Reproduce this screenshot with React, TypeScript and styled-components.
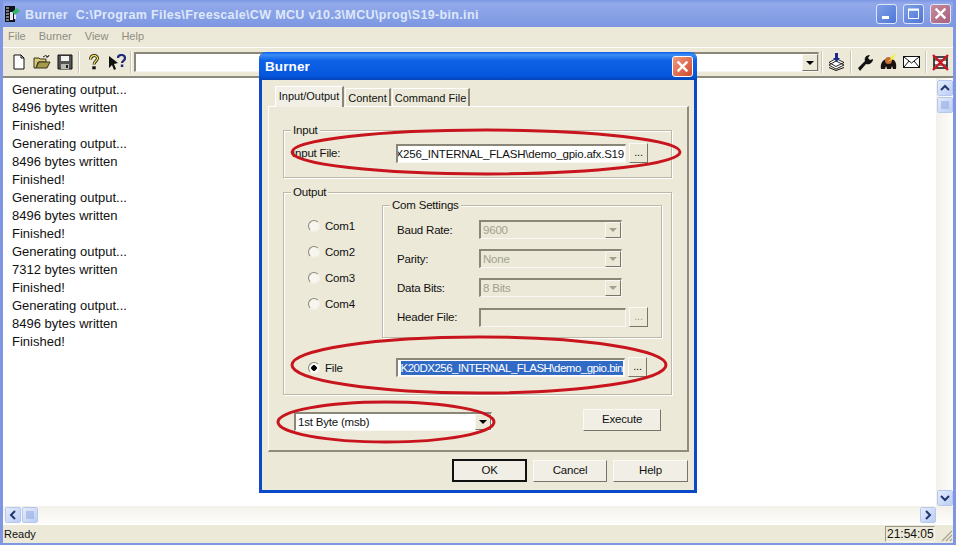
import React from "react";
import styled, { createGlobalStyle } from "styled-components";

const logLines = [
    "Generating output...", "8496 bytes written", "Finished!",
    "Generating output...", "8496 bytes written", "Finished!",
    "Generating output...", "8496 bytes written", "Finished!",
    "Generating output...", "7312 bytes written", "Finished!",
    "Generating output...", "8496 bytes written", "Finished!",
];

const GlobalStyle = createGlobalStyle`
    html, body { margin: 0; padding: 0; background: #ece9d8; overflow: hidden; }
    * { box-sizing: border-box; }
`;

const Page = styled.div`
    position: relative;
    width: 956px;
    height: 545px;
    display: flex;
    flex-direction: column;
    background: #ece9d8;
    font-family: "Liberation Sans", sans-serif;
    font-size: 12px;
    color: #111;
    border-left: 3px solid #7f96e2;
    border-right: 3px solid #7f96e2;
    border-bottom: 2px solid #7f96e2;
    overflow: hidden;
`;

const TitleBar = styled.div`
    height: 27px;
    margin: 0 -3px;
    padding: 0 5px;
    display: flex;
    align-items: center;
    gap: 4px;
    background: linear-gradient(180deg, #7d97e4 0%, #92a9ea 14%, #86a0e6 60%, #7c96e2 100%);
`;

const TitleText = styled.div`
    flex: 1;
    color: #dfe8fa;
    font-weight: bold;
    font-size: 12.5px;
    letter-spacing: 0.35px;
    white-space: pre;
    margin-top: 2px;
`;

const WinButton = styled.div<{ $close?: boolean }>`
    width: 21px;
    height: 20px;
    margin-left: 2px;
    border: 1px solid #dfe6f8;
    border-radius: 3px;
    background: ${(p) => (p.$close ? "linear-gradient(135deg, #c58a9c, #a95f7c)" : "linear-gradient(135deg, #7f9fe8, #4f76d6)")};
    display: flex;
    align-items: center;
    justify-content: center;
`;

const MenuBar = styled.div`
    height: 20px;
    display: flex;
    align-items: center;
    padding: 0 0 2px 5px;
    gap: 13px;
    color: #8f8d82;
    font-size: 11px;
`;

const Toolbar = styled.div`
    height: 31px;
    display: flex;
    align-items: center;
    padding-left: 4px;
    padding-right: 1px;
    border-top: 1px solid #fff;
    border-bottom: 2px solid #8d8a7c;
`;

const ToolIcon = styled.div`
    width: 23px;
    height: 24px;
    display: flex;
    align-items: center;
    justify-content: center;
    flex: none;
`;

const ToolSep = styled.div`
    width: 2px;
    height: 22px;
    margin: 0 2px;
    flex: none;
    background: #c9c5b4;
    border-right: 1px solid #fff;
`;

const ToolCombo = styled.div`
    flex: 1;
    height: 20px;
    background: #fff;
    border-top: 2px solid #8a8778;
    border-left: 2px solid #8a8778;
    border-right: 1px solid #d8d4c4;
    border-bottom: 1px solid #f6f5ef;
    display: flex;
    justify-content: flex-end;
`;

const ComboArrow = styled.div<{ $disabled?: boolean }>`
    width: 16px;
    flex: none;
    background: #ece9d8;
    border: 1px solid;
    border-color: #f8f7f1 #77746a #77746a #f8f7f1;
    display: flex;
    align-items: center;
    justify-content: center;
    &::after {
        content: "";
        border-top: 4px solid ${(p) => (p.$disabled ? "#a3a08f" : "#000")};
        border-left: 4px solid transparent;
        border-right: 4px solid transparent;
    }
`;

const Middle = styled.div`
    flex: 1;
    display: flex;
    min-height: 0;
`;

const LogArea = styled.div`
    flex: 1;
    background: #fff;
    padding: 3px 0 0 9px;
`;

const LogLine = styled.div`
    height: 18px;
    line-height: 18px;
    font-size: 13px;
`;

const VScroll = styled.div`
    width: 17px;
    background: linear-gradient(90deg, #f3f1ea, #fdfdfb);
    display: flex;
    flex-direction: column;
    padding: 2px 0 0 1px;
    gap: 1px;
`;

const ScrollBtn = styled.div`
    width: 16px;
    height: 16px;
    flex: none;
    border: 1px solid #fff;
    outline: 1px solid #b6c7ee;
    outline-offset: -1px;
    border-radius: 2px;
    background: linear-gradient(135deg, #e4ecfc, #bccdf4);
    display: flex;
    align-items: center;
    justify-content: center;
`;

const VSpacer = styled.div`
    flex: 1;
`;

const HScroll = styled.div`
    height: 19px;
    display: flex;
    align-items: center;
    gap: 1px;
    padding: 0 17px 0 2px;
    background: linear-gradient(180deg, #f3f1ea, #fdfdfb);
    border-bottom: 1px solid #fff;
`;

const StatusBar = styled.div`
    height: 18px;
    display: flex;
    align-items: center;
    padding-left: 1px;
    font-size: 11px;
`;

const StatusText = styled.div`
    flex: 1;
`;

const Clock = styled.div`
    width: 50px;
    height: 16px;
    line-height: 15px;
    padding-left: 1px;
    font-size: 12px;
    border: 1px solid;
    border-color: #9a9788 #f5f4ee #f5f4ee #9a9788;
`;

const Grip = styled.div`
    width: 18px;
    height: 16px;
    display: flex;
    align-items: flex-end;
    justify-content: flex-end;
`;

/* dialog floats over the main window */
const Dialog = styled.div`
    position: absolute;
    left: 256px;
    top: 52px;
    width: 438px;
    height: 441px;
    display: flex;
    flex-direction: column;
    background: #ece9d8;
    border: 3px solid #0b49c8;
    border-top: none;
    border-radius: 7px 7px 0 0;
`;

const DialogTitle = styled.div`
    height: 29px;
    margin: 0 -3px;
    padding: 0 4px 0 6px;
    display: flex;
    align-items: center;
    justify-content: space-between;
    border-radius: 7px 7px 0 0;
    background: linear-gradient(180deg, #0a5de6 0%, #3b8cf6 10%, #0f62e6 30%, #0556dc 85%, #0444b8 100%);
    color: #fff;
    font-weight: bold;
    font-size: 13.5px;
    letter-spacing: 0.1px;
`;

const DialogClose = styled.div`
    width: 21px;
    height: 21px;
    border: 1px solid #fff;
    border-radius: 3px;
    background: linear-gradient(135deg, #ee9a80, #d2492c);
    display: flex;
    align-items: center;
    justify-content: center;
`;

const DialogBody = styled.div`
    flex: 1;
    display: flex;
    flex-direction: column;
    padding: 5px 5px 8px 6px;
    font-size: 11.5px;
    letter-spacing: -0.2px;
`;

const Tabs = styled.div`
    display: flex;
    align-items: flex-end;
    height: 21px;
    padding-left: 7px;
    gap: 1px;
`;

const Tab = styled.div<{ $active?: boolean; $w: number }>`
    width: ${(p) => p.$w}px;
    height: ${(p) => (p.$active ? 21 : 18)}px;
    line-height: ${(p) => (p.$active ? 19 : 18)}px;
    text-align: center;
    white-space: nowrap;
    font-size: 11px;
    letter-spacing: 0;
    background: ${(p) => (p.$active ? "#f2f0e6" : "#ece9d8")};
    border: 1px solid #fff;
    border-right: 2px solid #8a8778;
    border-bottom: none;
    margin-bottom: ${(p) => (p.$active ? -1 : 0)}px;
    position: relative;
`;

const TabPanel = styled.div`
    height: 346px;
    padding: 23px 15px 0 14px;
    border: 1px solid #fff;
    border-right: 2px solid #8f8c7d;
    border-bottom: 2px solid #8f8c7d;
    display: flex;
    flex-direction: column;
`;

const Group = styled.div<{ $h: number; $w?: number }>`
    position: relative;
    height: ${(p) => p.$h}px;
    width: ${(p) => (p.$w ? p.$w + "px" : "auto")};
    border: 1px solid #bdb9a8;
    box-shadow: 1px 1px 0 #fff, inset 1px 1px 0 #fff;
`;

const OutputGroup = styled(Group)`
    margin-top: 14px;
`;

const Legend = styled.span`
    position: absolute;
    top: -8px;
    left: 7px;
    padding: 0 2px;
    line-height: 14px;
    background: #ece9d8;
`;

const Row = styled.div`
    display: flex;
    align-items: center;
`;

const InputRow = styled(Row)`
    padding: 12px 0 0 8px;
`;

const FieldLabel = styled.span<{ $w: number }>`
    width: ${(p) => p.$w}px;
    flex: none;
`;

const TextBox = styled.div<{ $w: number; $disabled?: boolean }>`
    width: ${(p) => p.$w}px;
    height: 19px;
    padding: 0 1px;
    display: flex;
    align-items: center;
    justify-content: flex-end;
    overflow: hidden;
    white-space: pre;
    background: ${(p) => (p.$disabled ? "#ece9d8" : "#fff")};
    border-top: 2px solid #8a8778;
    border-left: 2px solid #8a8778;
    border-right: 1px solid #f8f7f1;
    border-bottom: 1px solid #f8f7f1;
`;

const Selected = styled.span`
    background: #316ac5;
    color: #fff;
    line-height: 14px;
    letter-spacing: -0.5px;
`;

const DotsButton = styled.div<{ $disabled?: boolean }>`
    width: 19px;
    height: 20px;
    margin-left: 3px;
    flex: none;
    text-align: center;
    line-height: 16px;
    font-size: 11px;
    color: ${(p) => (p.$disabled ? "#a3a08f" : "#111")};
    border: 1px solid;
    border-color: #fbfaf5 #77746a #77746a #fbfaf5;
`;

const OutputColumns = styled.div`
    display: flex;
    padding: 12px 0 0 24px;
`;

const Radios = styled.div`
    width: 74px;
    display: flex;
    flex-direction: column;
    gap: 13px;
    padding-top: 14px;
`;

const RadioRow = styled.label`
    display: flex;
    align-items: center;
    height: 13px;
    gap: 5px;
`;

const FileRow = styled(RadioRow)`
    position: absolute;
    left: 24px;
    top: 165px;
    height: 20px;
`;

const Radio = styled.span<{ $on?: boolean }>`
    width: 12px;
    height: 12px;
    flex: none;
    border-radius: 50%;
    background: ${(p) => (p.$on ? "radial-gradient(circle, #000 0 2.5px, #fbfaf5 3px)" : "#f6f5ee")};
    border: 1px solid;
    border-color: #8a8778 #f2f0e6 #f2f0e6 #8a8778;
`;

const ComRows = styled.div`
    display: flex;
    flex-direction: column;
    gap: 10px;
    padding: 14px 0 0 14px;
`;

const DisabledSelect = styled.div`
    width: 143px;
    height: 19px;
    display: flex;
    justify-content: space-between;
    align-items: stretch;
    padding-left: 2px;
    line-height: 16px;
    color: #a3a08f;
    border-top: 2px solid #8a8778;
    border-left: 2px solid #8a8778;
    border-right: 1px solid #f8f7f1;
    border-bottom: 1px solid #f8f7f1;
`;

const FileFieldRow = styled(Row)`
    position: absolute;
    left: 112px;
    top: 164px;
`;

const BottomRow = styled(Row)`
    align-items: flex-end;
    justify-content: space-between;
    padding: 14px 11px 0 11px;
`;

const ByteCombo = styled.div`
    width: 198px;
    height: 19px;
    display: flex;
    align-items: stretch;
    justify-content: space-between;
    padding-left: 2px;
    line-height: 16px;
    background: #fff;
    border-top: 2px solid #8a8778;
    border-left: 2px solid #8a8778;
    border-right: 1px solid #f8f7f1;
    border-bottom: 1px solid #f8f7f1;
`;

const PushButton = styled.div<{ $w: number; $default?: boolean }>`
    width: ${(p) => p.$w}px;
    height: ${(p) => (p.$default ? 23 : 22)}px;
    line-height: 19px;
    text-align: center;
    background: #f1efe5;
    border: ${(p) => (p.$default ? "2px solid #111" : "1px solid")};
    border-color: ${(p) => (p.$default ? "#111" : "#fbfaf5 #77746a #77746a #fbfaf5")};
`;

const DialogButtons = styled(Row)`
    justify-content: flex-end;
    gap: 6px;
    padding: 7px 1px 0 0;
`;

const MarkUps = styled.svg`
    position: absolute;
    left: -3px;
    top: 0;
    width: 438px;
    height: 441px;
    pointer-events: none;
`;

const NewIcon = () => (
    <svg width="16" height="16" viewBox="0 0 16 16">
        <path d="M3 1h7l3 3v11H3z" fill="#fff" stroke="#111" />
        <path d="M10 1v3h3" fill="none" stroke="#111" />
    </svg>
);
const OpenIcon = () => (
    <svg width="18" height="16" viewBox="0 0 18 16">
        <path d="M1 4h5l1 1h6v3H5l-2 6H1z" fill="#d9c978" stroke="#3a3518" />
        <path d="M3 14l3-6h11l-3 6z" fill="#a59a4c" stroke="#3a3518" />
        <path d="M10 3q3-3 5 0M15 3l1-2M15 3l-2 0" fill="none" stroke="#222" />
    </svg>
);
const SaveIcon = () => (
    <svg width="16" height="16" viewBox="0 0 16 16">
        <path d="M1 1h14v14H1z" fill="#555" stroke="#111" />
        <path d="M4 2h8v5H4z" fill="#f4f4f0" />
        <path d="M4 10h8v5H4z" fill="#b8b8ac" />
        <path d="M9 11h2v3H9z" fill="#222" />
    </svg>
);
const HelpIcon = () => (
    <svg width="12" height="16" viewBox="0 0 14 18">
        <path d="M3 6c0-6 8-6 8-1 0 3-4 3-4 7" fill="none" stroke="#111" strokeWidth="3.4" />
        <path d="M3 6c0-6 8-6 8-1 0 3-4 3-4 7" fill="none" stroke="#f4e05a" strokeWidth="1.6" />
        <rect x="5" y="14" width="4" height="3.5" fill="#111" />
    </svg>
);
const ArrowHelpIcon = () => (
    <svg width="18" height="17" viewBox="0 0 18 17">
        <path d="M1 2l9 7-4 1 2 5-2 1-2-5-3 3z" fill="#111" />
        <path d="M10 4c0-4 7-4 7 0 0 3-3 2.500-3 5" fill="none" stroke="#1c2a78" strokeWidth="2.200" />
        <rect x="12.800" y="10.500" width="2.500" height="2.500" fill="#1c2a78" />
    </svg>
);
const StackIcon = () => (
    <svg width="17" height="18" viewBox="0 0 17 18">
        <path d="M1 12l7-4 8 4-8 4z M1 9.500l7-4 8 4-8 4z" fill="#fff" stroke="#111" strokeWidth="0.900" />
        <path d="M1 14.500l7 3 8-3" fill="none" stroke="#111" />
        <path d="M7 0h3v5h2l-3.500 4L5 5h2z" fill="#1b2a8f" />
    </svg>
);
const WrenchIcon = () => (
    <svg width="17" height="17" viewBox="0 0 17 17">
        <path d="M1 14l7-7c-1-3 1-6 5-6l-2 3 2 2 3-1c0 4-4 6-7 5l-6 7z" fill="#111" />
    </svg>
);
const PersonIcon = () => (
    <svg width="17" height="16" viewBox="0 0 17 16">
        <path d="M1 15c-1-6 2-9 5-10h6c3 1 5 4 4 10h-3l-1-3-1 3H7l-1-3-1 3z" fill="#1a1210" />
        <circle cx="8.500" cy="6.500" r="3.500" fill="#c46a3a" />
        <path d="M15 0l-5 4 1 1-4 3 7-3-1-1 3-4z" fill="#f5ee2a" />
    </svg>
);
const MailIcon = () => (
    <svg width="17" height="12" viewBox="0 0 17 12">
        <rect x="0.500" y="0.500" width="16" height="11" fill="#fff" stroke="#111" />
        <path d="M1 1l7.500 6L16 1M1 11l5-6M16 11l-5-6" fill="none" stroke="#111" />
    </svg>
);
const StopIcon = () => (
    <svg width="17" height="17" viewBox="0 0 17 17">
        <rect x="2" y="3" width="13" height="11" fill="#f2f2f2" stroke="#111" strokeWidth="1.500" />
        <path d="M2 6h13M2 11h13" stroke="#111" />
        <path d="M1 1l15 15M16 1L1 16" stroke="#cc1420" strokeWidth="2.400" />
    </svg>
);
const AppIcon = () => (
    <svg width="16" height="16" viewBox="0 0 16 16">
        <rect width="10" height="16" fill="#101018" />
        <path d="M1 2h3M1 5h3M1 8h3M1 11h3M1 14h3" stroke="#e8e8e8" />
        <path d="M5 6h3v8H5zM9 8h2v5H9z" fill="#e8e8f8" />
        <path d="M7 6l5-4 3 3-5 4z" fill="#35b56a" />
    </svg>
);
const Chevron = ({ d }: { d: string }) => (
    <svg width="10" height="10" viewBox="0 0 10 10">
        <path d={d} fill="none" stroke="#20366f" strokeWidth="2" />
    </svg>
);
const Thumb = ({ vertical }: { vertical?: boolean }) => (
    <svg width="8" height="8" viewBox="0 0 8 8">
        <path d={vertical ? "M0 1h8M0 3h8M0 5h8M0 7h8" : "M1 0v8M3 0v8M5 0v8M7 0v8"} stroke="#8aa3dc" />
    </svg>
);
const CloseGlyph = ({ size }: { size: number }) => (
    <svg width={size} height={size} viewBox="0 0 12 12">
        <path d="M1.500 1.500l9 9M10.500 1.500l-9 9" stroke="#fff" strokeWidth="2.200" />
    </svg>
);

const App = () => {
    return (
        <Page>
            <GlobalStyle />
            <TitleBar>
                <AppIcon />
                <TitleText>{"Burner  C:\\Program Files\\Freescale\\CW MCU v10.3\\MCU\\prog\\S19-bin.ini"}</TitleText>
                <WinButton>
                    <svg width="13" height="13" viewBox="0 0 13 13"><rect x="2" y="9" width="7" height="3" fill="#fff" /></svg>
                </WinButton>
                <WinButton>
                    <svg width="13" height="13" viewBox="0 0 13 13"><path d="M1.500 3h10v8.500h-10z" fill="none" stroke="#fff" /><rect x="1" y="1.500" width="11" height="2" fill="#fff" /></svg>
                </WinButton>
                <WinButton $close><CloseGlyph size={13} /></WinButton>
            </TitleBar>
            <MenuBar>
                <span>File</span>
                <span>Burner</span>
                <span>View</span>
                <span>Help</span>
            </MenuBar>
            <Toolbar>
                <ToolIcon><NewIcon /></ToolIcon>
                <ToolIcon><OpenIcon /></ToolIcon>
                <ToolIcon><SaveIcon /></ToolIcon>
                <ToolSep />
                <ToolIcon><HelpIcon /></ToolIcon>
                <ToolIcon><ArrowHelpIcon /></ToolIcon>
                <ToolSep />
                <ToolCombo><ComboArrow /></ToolCombo>
                <ToolSep />
                <ToolIcon><StackIcon /></ToolIcon>
                <ToolSep />
                <ToolIcon><WrenchIcon /></ToolIcon>
                <ToolIcon><PersonIcon /></ToolIcon>
                <ToolIcon><MailIcon /></ToolIcon>
                <ToolSep />
                <ToolIcon><StopIcon /></ToolIcon>
            </Toolbar>
            <Middle>
                <LogArea>
                    {logLines.map((line, i) => (
                        <LogLine key={i}>{line}</LogLine>
                    ))}
                </LogArea>
                <VScroll>
                    <ScrollBtn><Chevron d="M1 7l4-4 4 4" /></ScrollBtn>
                    <ScrollBtn><Thumb vertical /></ScrollBtn>
                    <VSpacer />
                    <ScrollBtn><Chevron d="M1 3l4 4 4-4" /></ScrollBtn>
                </VScroll>
            </Middle>
            <HScroll>
                <ScrollBtn><Chevron d="M7 1L3 5l4 4" /></ScrollBtn>
                <ScrollBtn><Thumb /></ScrollBtn>
                <VSpacer />
                <ScrollBtn><Chevron d="M3 1l4 4-4 4" /></ScrollBtn>
            </HScroll>
            <StatusBar>
                <StatusText>Ready</StatusText>
                <Clock>21:54:05</Clock>
                <Grip>
                    <svg width="14" height="14" viewBox="0 0 14 14">
                        <path d="M13 3L3 13M13 7l-6 6M13 11l-2 2" stroke="#a8a595" strokeWidth="1.200" />
                    </svg>
                </Grip>
            </StatusBar>

            <Dialog>
                <DialogTitle>
                    <span>Burner</span>
                    <DialogClose><CloseGlyph size={13} /></DialogClose>
                </DialogTitle>
                <DialogBody>
                    <Tabs>
                        <Tab $active $w={69}>Input/Output</Tab>
                        <Tab $w={46}>Content</Tab>
                        <Tab $w={78}>Command File</Tab>
                    </Tabs>
                    <TabPanel>
                        <Group $h={48}>
                            <Legend>Input</Legend>
                            <InputRow>
                                <FieldLabel $w={104}>Input File:</FieldLabel>
                                <TextBox $w={230}>{"X256_INTERNAL_FLASH\\demo_gpio.afx.S19"}</TextBox>
                                <DotsButton>...</DotsButton>
                            </InputRow>
                        </Group>
                        <OutputGroup $h={203}>
                            <Legend>Output</Legend>
                            <OutputColumns>
                                <Radios>
                                    <RadioRow><Radio />Com1</RadioRow>
                                    <RadioRow><Radio />Com2</RadioRow>
                                    <RadioRow><Radio />Com3</RadioRow>
                                    <RadioRow><Radio />Com4</RadioRow>
                                </Radios>
                                <Group $h={133} $w={280}>
                                    <Legend>Com Settings</Legend>
                                    <ComRows>
                                        <Row><FieldLabel $w={82}>Baud Rate:</FieldLabel><DisabledSelect>9600<ComboArrow $disabled /></DisabledSelect></Row>
                                        <Row><FieldLabel $w={82}>Parity:</FieldLabel><DisabledSelect>None<ComboArrow $disabled /></DisabledSelect></Row>
                                        <Row><FieldLabel $w={82}>Data Bits:</FieldLabel><DisabledSelect>8 Bits<ComboArrow $disabled /></DisabledSelect></Row>
                                        <Row><FieldLabel $w={82}>Header File:</FieldLabel><TextBox $w={147} $disabled /><DotsButton $disabled>...</DotsButton></Row>
                                    </ComRows>
                                </Group>
                            </OutputColumns>
                            <FileRow><Radio $on />File</FileRow>
                            <FileFieldRow>
                                <TextBox $w={229}><Selected>{"K20DX256_INTERNAL_FLASH\\demo_gpio.bin"}</Selected></TextBox>
                                <DotsButton>...</DotsButton>
                            </FileFieldRow>
                        </OutputGroup>
                        <BottomRow>
                            <ByteCombo>1st Byte (msb)<ComboArrow /></ByteCombo>
                            <PushButton $w={78}>Execute</PushButton>
                        </BottomRow>
                    </TabPanel>
                    <DialogButtons>
                        <PushButton $w={75} $default>OK</PushButton>
                        <PushButton $w={74}>Cancel</PushButton>
                        <PushButton $w={75}>Help</PushButton>
                    </DialogButtons>
                </DialogBody>
                <MarkUps viewBox="0 0 438 441">
                    <ellipse cx="227" cy="100" rx="194" ry="22" fill="none" stroke="#c8141c" strokeWidth="3" />
                    <ellipse cx="220" cy="313" rx="187" ry="28" fill="none" stroke="#c8141c" strokeWidth="3" />
                    <ellipse cx="127" cy="370" rx="108" ry="20" fill="none" stroke="#c8141c" strokeWidth="3" />
                </MarkUps>
            </Dialog>
        </Page>
    );
};

export default App;
